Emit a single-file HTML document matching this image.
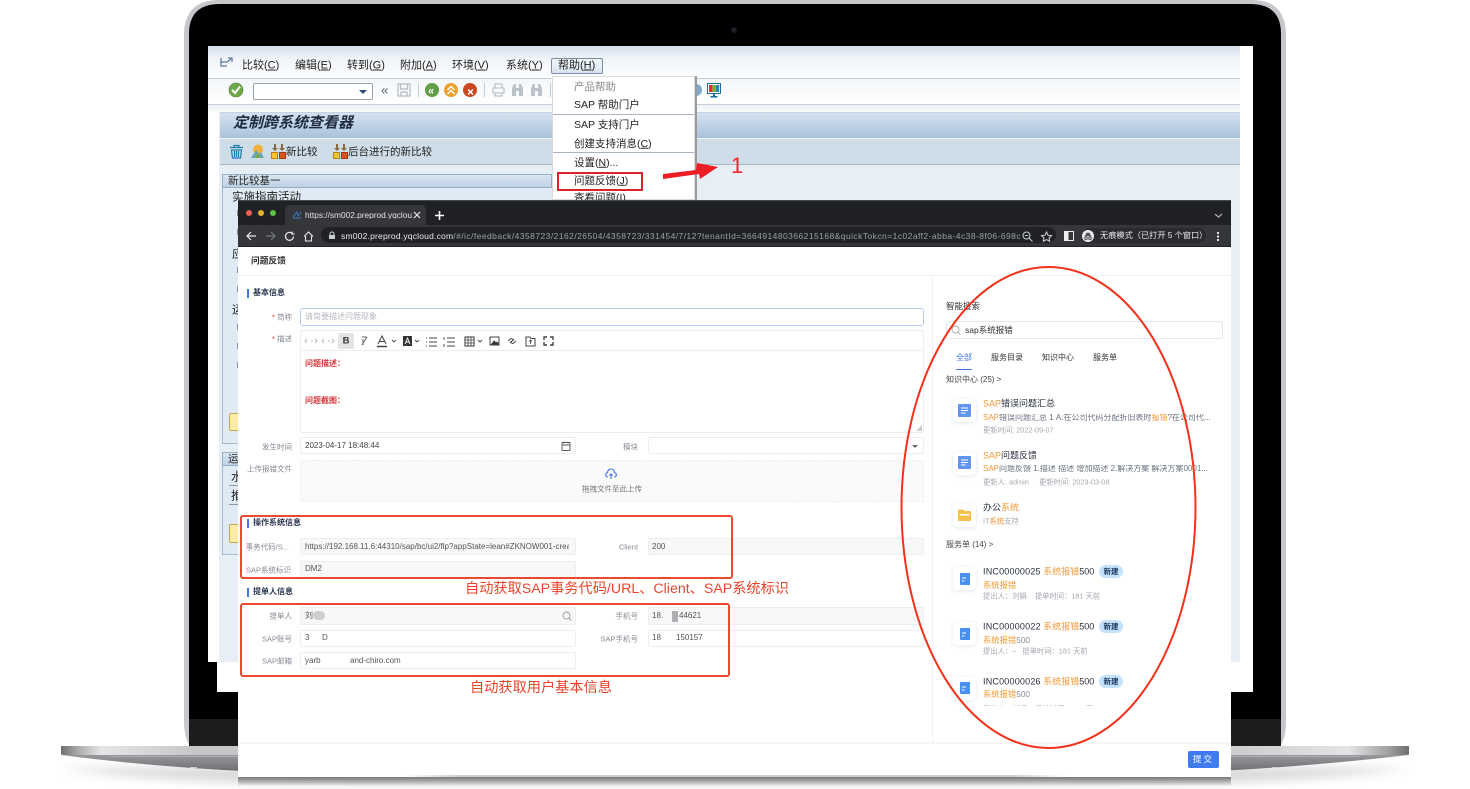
<!DOCTYPE html>
<html lang="zh"><head><meta charset="utf-8"><title>SAP 问题反馈</title>
<style>
*{box-sizing:border-box}
html,body{margin:0;padding:0;width:1470px;height:789px;overflow:hidden;background:#fff}
body{position:relative;font-family:"Liberation Sans","Noto Sans CJK SC",sans-serif;color:#333}
.a{position:absolute}
.t{position:absolute;white-space:nowrap;line-height:1;transform:translateY(-50%);filter:blur(.25px)}
.r{position:absolute;white-space:nowrap;line-height:1;transform:translate(-100%,-50%);color:#858a94;font-size:7.5px;filter:blur(.25px)}
.m{font-size:11px;color:#222}
.d{font-size:10.5px;color:#222;left:574px}
.f{position:absolute;border:1px solid #eceef2;border-radius:2px;background:#fff}
.g{background:#f8f8f9}
.v{font-size:8px;color:#555}
.sec{position:absolute;left:247px;width:2px;height:9px;background:#3f78e8}
.st{font-size:8px;font-weight:bold;color:#2a3550;left:253px}
.tile{position:absolute;width:23px;height:23px;background:#fff;border-radius:4px;box-shadow:0 1px 5px rgba(60,90,150,.14)}
.ttl{font-size:9px;color:#2b3140;left:983px}
.o{color:#f09a36}
.sub{font-size:8px;color:#6b7280;left:983px}
.meta{font-size:7.3px;color:#a4a8b0;left:983px}
.bd{position:absolute;left:1099px;width:24px;height:13px;border-radius:7px;background:#c4e2fb;font-size:7.5px;line-height:13px;text-align:center;color:#17325a;font-weight:bold}
svg{position:absolute;overflow:visible}
</style></head>
<body>

<!-- laptop -->
<svg style="left:0;top:0" width="1470" height="789" viewBox="0 0 1470 789">
<defs>
<linearGradient id="cap" x1="0" x2="1" y1="0" y2="0">
<stop offset="0" stop-color="#6f6f72"/><stop offset=".012" stop-color="#a9a9ab"/><stop offset=".03" stop-color="#e6e6e6"/><stop offset=".1" stop-color="#c6c6c8"/><stop offset=".88" stop-color="#cfcfd1"/><stop offset=".955" stop-color="#e4e4e4"/><stop offset=".985" stop-color="#a0a0a2"/><stop offset="1" stop-color="#6e6e70"/>
</linearGradient>
<linearGradient id="low" x1="0" x2="0" y1="0" y2="1">
<stop offset="0" stop-color="#c4c4c6"/><stop offset=".35" stop-color="#97979b"/><stop offset="1" stop-color="#66666a"/>
</linearGradient>
<filter id="bl" x="-5%" y="-200%" width="110%" height="500%"><feGaussianBlur stdDeviation="5"/></filter>
</defs>
<path d="M60 768 H1410 Q1300 784 1100 784 H370 Q170 784 60 768Z" fill="#999" opacity=".4" filter="url(#bl)"/>
<path d="M219 0 H1252 Q1286 0 1286 36 V720 Q1286 738 1280 746 H190 Q184 738 184 720 V36 Q184 0 219 0Z" fill="#c6c6cb"/>
<path d="M220 4 H1250 Q1281 4 1281 34 V746 H189 V34 Q189 4 220 4Z" fill="#000"/>
<rect x="189" y="719" width="1092" height="27" fill="#1b1c1e"/>
<circle cx="734" cy="30" r="3" fill="#15171c"/><circle cx="734" cy="30" r="1.2" fill="#2a2d36"/>
<path d="M61 746 H1409 V755 Q1250 773 1120 774 H350 Q200 773 61 755Z" fill="url(#low)"/>
<path d="M61 746 H1409 V754 L1405 755 H65 L61 754Z" fill="url(#cap)"/>
<rect x="110" y="756" width="1250" height="1" fill="#d6d6d8" opacity=".35"/>
<rect x="190" y="767" width="7" height="1" fill="#cfcfd1"/><rect x="1272" y="767" width="7" height="1" fill="#cfcfd1"/>
</svg>

<!-- SAP window -->
<div class="a" style="left:217px;top:640px;width:1036px;height:52px;background:#fff"></div>
<div class="a" style="left:1240px;top:46px;width:13px;height:646px;background:#fff"></div>
<div class="a" style="left:208px;top:46px;width:1032px;height:616px;background:#e7eef6"></div>
<div class="a" style="left:208px;top:46px;width:11px;height:616px;background:#fff"></div>
<div class="a" style="left:208px;top:46px;width:1032px;height:32px;background:linear-gradient(#d5deeb,#eef2f7 35%,#fff)"></div>
<div class="a" style="left:208px;top:78px;width:1032px;height:1px;background:#c5cdd8"></div>
<div class="a" style="left:208px;top:79px;width:1032px;height:25px;background:linear-gradient(#f3f6fa,#fff)"></div>
<div class="a" style="left:208px;top:104px;width:1032px;height:1px;background:#c5cdd8"></div>
<div class="a" style="left:208px;top:105px;width:1032px;height:7px;background:linear-gradient(#eef2f7,#f8fafc)"></div>
<div class="a" style="left:220px;top:112px;width:1020px;height:1px;background:#c8d2de"></div>
<div class="a" style="left:220px;top:113px;width:1020px;height:25px;background:linear-gradient(#d4e2ef,#aac2da)"></div>
<div class="a" style="left:220px;top:138px;width:1020px;height:1px;background:#eef3f8"></div>
<div class="a" style="left:220px;top:139px;width:1020px;height:26px;background:#cfdde8;border-bottom:1px solid #a9b7c5"></div>

<svg style="left:219px;top:57px" width="15" height="13" viewBox="0 0 15 13" fill="none" stroke="#3a5a8a" stroke-width="1"><path d="M2 1V9H8M2 5H8L12 2"/><path d="M9 1H13V5"/></svg>
<span class="t m" style="left:242px;top:66px">比较(<u>C</u>)</span>
<span class="t m" style="left:295px;top:66px">编辑(<u>E</u>)</span>
<span class="t m" style="left:347px;top:66px">转到(<u>G</u>)</span>
<span class="t m" style="left:400px;top:66px">附加(<u>A</u>)</span>
<span class="t m" style="left:452px;top:66px">环境(<u>V</u>)</span>
<span class="t m" style="left:506px;top:66px">系统(<u>Y</u>)</span>
<div class="a" style="left:551px;top:58px;width:52px;height:16px;border:1px solid #7c8ea8;border-radius:2px;background:linear-gradient(#f2f6fb,#d9e4f0)"></div>
<span class="t m" style="left:558px;top:66px">帮助(<u>H</u>)</span>

<!-- toolbar -->
<svg style="left:228px;top:82px" width="16" height="16" viewBox="0 0 16 16"><circle cx="8" cy="8" r="7" fill="#6fa84a" stroke="#4a8030" stroke-width=".6"/><path d="M4 8L7 11L12 4.5" fill="none" stroke="#fff" stroke-width="2"/></svg>
<div class="a" style="left:253px;top:83px;width:120px;height:17px;background:#fff;border:1px solid #9aa3ae;border-radius:2px"></div>
<svg style="left:358px;top:89px" width="10" height="6"><path d="M1 1H9L5 5Z" fill="#2d4a73"/></svg>
<span class="t" style="left:381px;top:90px;font-size:13px;color:#55606e">«</span>
<svg style="left:397px;top:83px" width="14" height="14" viewBox="0 0 14 14" fill="none" stroke="#b3bac3" stroke-width="1.2"><path d="M1 1H13V13H1Z"/><path d="M3.5 1V6H10.5V1M4 13V9H10V13"/></svg>
<div class="a" style="left:418px;top:83px;width:1px;height:14px;background:#bcd0e0"></div>
<svg style="left:425px;top:83px" width="14" height="14"><circle cx="7" cy="7" r="7" fill="#5f9e44"/><text x="3" y="11.5" font-size="11" fill="#fff" font-weight="bold" font-family="Liberation Sans">«</text></svg>
<svg style="left:444px;top:83px" width="14" height="14"><circle cx="7" cy="7" r="7" fill="#eda12c"/><path d="M3.5 7L7 3.5L10.5 7M3.5 11L7 7.5L10.5 11" fill="none" stroke="#fff" stroke-width="1.4"/></svg>
<svg style="left:463px;top:83px" width="14" height="14"><circle cx="7" cy="7" r="7" fill="#c9481f"/><path d="M5 6.5L10 11.5M10 6.5L5 11.5" stroke="#fff" stroke-width="1.5"/></svg>
<div class="a" style="left:484px;top:83px;width:1px;height:14px;background:#bcd0e0"></div>
<svg style="left:492px;top:83px" width="14" height="14" fill="none" stroke="#b3bac3" stroke-width="1.1"><path d="M3 5V1H10V5M1 5H12V10H1ZM3 10V13H10V10"/></svg>
<svg style="left:511px;top:83px" width="13" height="14" fill="#bcc2ca"><path d="M1 5L3 1H5V5H8V1H10L12 5V13H8V8H5V13H1Z"/></svg>
<svg style="left:530px;top:83px" width="13" height="14" fill="#bcc2ca"><path d="M1 5L3 1H5V5H8V1H10L12 5V13H8V8H5V13H1Z"/></svg>
<div class="a" style="left:550px;top:83px;width:1px;height:14px;background:#bcd0e0"></div>
<svg style="left:690px;top:83px" width="14" height="14"><circle cx="6" cy="7" r="6" fill="#7fa9c9"/></svg>
<svg style="left:707px;top:83px" width="14" height="15" viewBox="0 0 14 15"><rect x=".5" y=".5" width="13" height="10" fill="#fff" stroke="#1a6f97"/><rect x="2" y="2" width="3.4" height="7" fill="#d33"/><rect x="5.4" y="2" width="3.4" height="7" fill="#7ab32e"/><rect x="8.8" y="2" width="3.4" height="7" fill="#2a7fc0"/><path d="M6 11H8V13H10.5V14.5H3.5V13H6Z" fill="#1a6f97"/></svg>

<!-- title + app toolbar -->
<span class="t" style="left:233px;top:123px;font-size:15px;font-weight:bold;font-style:italic;color:#1d2c3e">定制跨系统查看器</span>
<svg style="left:229px;top:144px" width="15" height="15" viewBox="0 0 15 15" fill="none" stroke="#1a7fa8" stroke-width="1.2"><path d="M1 3.5H14M5 3V1.5H10V3M2.5 6H12.5L11.5 14H3.5Z"/><path d="M5.5 7V13M7.5 7V13M9.5 7V13"/></svg>
<svg style="left:250px;top:144px" width="15" height="15" viewBox="0 0 15 15"><circle cx="8" cy="5.5" r="5" fill="#f1b03c"/><path d="M1 14L6 6L9 10L11 8L14 14Z" fill="#6aa5c0"/><path d="M5 14L8 9L11 14Z" fill="#78a94b"/></svg>
<svg style="left:271px;top:144px" width="15" height="15" viewBox="0 0 15 15"><path d="M3 0H5V4H7L4 7L1 4H3ZM10 0H12V4H14L11 7L8 4H10Z" fill="#8a6a40"/><rect x=".5" y="8.5" width="6" height="6" fill="#f7c236" stroke="#b98314"/><rect x="8.5" y="8.5" width="6" height="6" fill="#d8551f" stroke="#a33a10"/></svg>
<span class="t" style="left:286px;top:152px;font-size:10.5px;color:#222">新比较</span>
<svg style="left:333px;top:144px" width="15" height="15" viewBox="0 0 15 15"><path d="M3 0H5V4H7L4 7L1 4H3ZM10 0H12V4H14L11 7L8 4H10Z" fill="#8a6a40"/><rect x=".5" y="8.5" width="6" height="6" fill="#f7c236" stroke="#b98314"/><rect x="8.5" y="8.5" width="6" height="6" fill="#d8551f" stroke="#a33a10"/></svg>
<span class="t" style="left:348px;top:152px;font-size:10.5px;color:#222">后台进行的新比较</span>

<!-- group boxes -->
<div class="a" style="left:222px;top:174px;width:340px;height:270px;border:1px solid #a7bbcf;background:#dfeaf4"></div>
<div class="a" style="left:222px;top:174px;width:330px;height:14px;background:linear-gradient(#dbe7f2,#bcd1e5);border:1px solid #97aec5"></div>
<span class="t" style="left:228px;top:181px;font-size:10.5px;color:#222">新比较基一</span>
<span class="t" style="left:232px;top:198px;font-size:11.5px;color:#222">实施指南活动</span>
<span class="t" style="left:232px;top:255px;font-size:11.5px;color:#222">应</span>
<span class="t" style="left:232px;top:311px;font-size:11.5px;color:#222">运</span>
<div class="a" style="left:237px;top:210px;width:1px;height:165px;background:repeating-linear-gradient(#8a95a2 0 6px,transparent 6px 19px)"></div>
<div class="a" style="left:229px;top:413px;width:12px;height:18px;background:#fbeaa8;border:1px solid #c4a94d;border-radius:2px"></div>
<div class="a" style="left:222px;top:452px;width:20px;height:103px;border:1px solid #a7bbcf;background:#dfeaf4"></div>
<div class="a" style="left:222px;top:452px;width:20px;height:14px;background:linear-gradient(#dbe7f2,#bcd1e5);border:1px solid #97aec5"></div>
<span class="t" style="left:228px;top:459px;font-size:10.5px;color:#222">运</span>
<span class="t" style="left:231px;top:478px;font-size:11.5px;color:#222">水</span>
<span class="t" style="left:231px;top:497px;font-size:11.5px;color:#222">推</span>
<div class="a" style="left:229px;top:485px;width:10px;height:1px;background:#8899aa"></div>
<div class="a" style="left:229px;top:504px;width:10px;height:1px;background:#8899aa"></div>
<div class="a" style="left:229px;top:524px;width:12px;height:19px;background:#fbeaa8;border:1px solid #c4a94d;border-radius:2px"></div>

<!-- dropdown -->
<div class="a" style="left:552px;top:76px;width:143px;height:124px;background:#fff;border:1px solid #d8dbe0;box-shadow:2px 0 0 #9b9b9b"></div>
<span class="t d" style="top:87px;color:#8a8a8a">产品帮助</span>
<span class="t d" style="top:105px">SAP 帮助门户</span>
<div class="a" style="left:553px;top:114px;width:141px;height:1px;background:#a9b4c2"></div>
<span class="t d" style="top:125px">SAP 支持门户</span>
<span class="t d" style="top:144px">创建支持消息(<u>C</u>)</span>
<div class="a" style="left:553px;top:152px;width:141px;height:1px;background:#a9b4c2"></div>
<span class="t d" style="top:163px">设置(<u>N</u>)...</span>
<span class="t d" style="top:181px">问题反馈(<u>J</u>)</span>
<span class="t d" style="top:198px">查看问题(I)</span>
<div class="a" style="left:557px;top:172px;width:86px;height:19px;border:2px solid #e0202a"></div>

<svg style="left:660px;top:155px" width="90" height="30"><path d="M3 19L36 15L37 8L58 12L40 24L39 19L3 24Z" fill="#ee1c25"/></svg>
<span class="t" style="left:731px;top:166px;font-size:22px;color:#ee2630;font-weight:normal">1</span>

<!-- Chrome window -->
<div class="a" style="left:238px;top:777px;width:993px;height:9px;background:linear-gradient(#7a7a7c,rgba(255,255,255,0))"></div>
<div class="a" style="left:238px;top:200px;width:993px;height:577px;background:#fff"></div>
<div class="a" style="left:238px;top:200px;width:993px;height:25px;background:#202124;border-top:1px solid #45484d"></div>
<div class="a" style="left:238px;top:225px;width:993px;height:22px;background:#35363a;border-bottom:1px solid #222"></div>
<div class="a" style="left:246px;top:210px;width:6px;height:6px;border-radius:50%;background:#ee5f57"></div>
<div class="a" style="left:258px;top:210px;width:6px;height:6px;border-radius:50%;background:#e3b12e"></div>
<div class="a" style="left:270px;top:210px;width:6px;height:6px;border-radius:50%;background:#5cc049"></div>
<div class="a" style="left:285px;top:205px;width:141px;height:20px;background:#35363a;border-radius:5px 5px 0 0"></div>
<svg style="left:292px;top:210px" width="10" height="10" fill="none" stroke="#3f78c9"><path d="M1 7L5 2L6 6L9 2M1 8H9"/></svg>
<span class="t" style="left:305px;top:215px;font-size:8.3px;color:#dfe1e5;width:108px;overflow:hidden">https://sm002.preprod.yqclou...</span>
<svg style="left:413px;top:211px" width="8" height="8" stroke="#e8eaed" stroke-width="1.2"><path d="M1 1L7 7M7 1L1 7"/></svg>
<svg style="left:435px;top:211px" width="9" height="9" stroke="#fff" stroke-width="1.6"><path d="M4.5 0V9M0 4.5H9"/></svg>
<svg style="left:1214px;top:213px" width="9" height="5" fill="none" stroke="#c0c3c8" stroke-width="1.1"><path d="M1 1L4.5 4L8 1"/></svg>
<svg style="left:246px;top:231px" width="11" height="10" fill="none" stroke="#e8eaed" stroke-width="1.2"><path d="M10 5H1M5 1L1 5L5 9"/></svg>
<svg style="left:265px;top:231px" width="11" height="10" fill="none" stroke="#777a80" stroke-width="1.2"><path d="M1 5H10M6 1L10 5L6 9"/></svg>
<svg style="left:284px;top:231px" width="11" height="11" fill="none" stroke="#e8eaed" stroke-width="1.2"><path d="M9.5 5.5A4 4 0 1 1 8 2.2M8 0.5V3H10.5"/></svg>
<svg style="left:303px;top:231px" width="11" height="11" fill="none" stroke="#e8eaed" stroke-width="1.1"><path d="M1 5.5L5.5 1L10 5.5M2.5 5V10H8.5V5"/></svg>
<div class="a" style="left:321px;top:227px;width:735px;height:16px;border-radius:8px;background:#202124"></div>
<svg style="left:329px;top:232px" width="6" height="7" fill="#c9ccd1"><rect y="3" width="6" height="4"/><path d="M1 3V2A2 2 0 0 1 5 2V3" fill="none" stroke="#c9ccd1"/></svg>
<span class="t" style="left:341px;top:236px;width:680px;overflow:hidden;font-size:8.5px;color:#9aa0a6;letter-spacing:.44px;padding:1px 0"><span style="color:#e8eaed;letter-spacing:.2px">sm002.preprod.yqcloud.com</span>/#/ic/feedback/4358723/2162/26504/4358723/331454/7/12?tenantId=366491480366215168&amp;quickTokcn=1c02aff2-abba-4c38-8f06-698c...</span>
<svg style="left:1022px;top:231px" width="11" height="11" fill="none" stroke="#c6c9ce" stroke-width="1.1"><circle cx="4.5" cy="4.5" r="3.5"/><path d="M7 7L10.5 10.5M3 4.5H6"/></svg>
<svg style="left:1041px;top:231px" width="11" height="11" fill="none" stroke="#d5d7db"><path d="M5.5 1L7 4.2L10.5 4.6L8 7L8.7 10.3L5.5 8.6L2.3 10.3L3 7L.5 4.6L4 4.2Z"/></svg>
<svg style="left:1064px;top:231px" width="10" height="10"><rect x=".5" y=".5" width="9" height="9" fill="#35363a" stroke="#eee"/><rect x="1" y="1" width="3.5" height="8" fill="#eee"/></svg>
<div class="a" style="left:1082px;top:228px;width:124px;height:15px;border-radius:8px;background:#2a2b2e"></div>
<svg style="left:1082px;top:230px" width="12" height="12"><circle cx="6" cy="6" r="6" fill="#e8eaed"/><path d="M2 6H10M3.5 6L4.5 3H7.5L8.500 6" fill="#555" stroke="#555" stroke-width=".6"/><circle cx="4" cy="8.200" r="1.300" fill="none" stroke="#555"/><circle cx="8" cy="8.200" r="1.300" fill="none" stroke="#555"/></svg>
<span class="t" style="left:1100px;top:236px;font-size:8.2px;color:#e8eaed">无痕模式（已打开 5 个窗口）</span>
<div class="a" style="left:1217px;top:232px;width:2px;height:2px;background:#e8eaed;box-shadow:0 3.500px #e8eaed,0 7px #e8eaed"></div>

<!-- page -->
<span class="t" style="left:251px;top:261px;font-size:8.7px;color:#2c2c2c;font-weight:bold">问题反馈</span>
<div class="a" style="left:238px;top:275px;width:993px;height:1px;background:#f0f1f3"></div>
<div class="a" style="left:932px;top:275px;width:1px;height:467px;background:#eff0f3"></div>
<div class="a" style="left:238px;top:742px;width:993px;height:2px;background:#f5f6f7"></div>

<div class="sec" style="top:289px"></div><span class="t st" style="top:293px">基本信息</span>
<span class="r" style="left:292px;top:317px"><span style="color:#e5352b">*</span> 简称</span>
<div class="f" style="left:300px;top:308px;width:624px;height:18px;border-color:#b6caf3;border-radius:3px"></div>
<span class="t" style="left:305px;top:317px;font-size:8px;color:#b5b8be">请简要描述问题现象</span>
<span class="r" style="left:292px;top:339px"><span style="color:#e5352b">*</span> 描述</span>
<div class="f" style="left:300px;top:330px;width:624px;height:103px"></div>
<div class="a" style="left:301px;top:350px;width:622px;height:1px;background:#eceef2"></div>
<div class="a" style="left:338px;top:333px;width:16px;height:16px;background:#e4e4e4;border-radius:2px"></div>
<svg style="left:300px;top:332px" width="260" height="18" fill="none" stroke="#444" stroke-width="1">
<path d="M7 7L5 9L7 11M11 9H13M15 7L17 9L15 11" stroke="#bbb"/><path d="M24 7L22 9L24 11M28 9H30M32 7L34 9L32 11" stroke="#bbb"/>
<path d="M63 7V13M67 5L62 13M62 5H67" stroke="#666"/>
<path d="M78 12L82 4L86 12M79.500 9.500H84.500" /><path d="M77 14.500H87" stroke-width="1.500"/>
<path d="M92 8L94 10L96 8" stroke-width=".9"/>
<rect x="103" y="4" width="9" height="10" fill="#333" stroke="none"/><path d="M105 12L107.500 6L110 12M106 10H109" stroke="#fff" stroke-width=".9"/>
<path d="M115 8L117 10L119 8" stroke-width=".9"/>
<path d="M129 6H137M129 10H137M129 14H137M126 6H127M126 10H127M126 14H127" stroke-width=".9"/>
<path d="M147 6H155M147 10H155M147 14H155M144 5V8M144 12V15" stroke-width=".9"/>
<rect x="165" y="5" width="9" height="9" stroke="#333"/><path d="M165 8H174M165 11H174M168 5V14M171 5V14" stroke-width=".8"/>
<path d="M178 8L180 10L182 8" stroke-width=".9"/>
<rect x="190" y="5" width="9" height="8" /><path d="M191 13L194 9L196 11L197 10L199 13Z" fill="#333"/>
<path d="M210 11L214 7M208 9L211 6.500A2 2 0 0 1 213 9M216 9L213 11.500A2 2 0 0 1 211 9" stroke-width=".9"/>
<path d="M226 5H230L231 6.500H235V14H226Z"/><path d="M230.500 12V8M229 9.500L230.500 8L232 9.500" stroke-width=".8"/>
<path d="M244 8V5H247M250 5H253V8M244 10V13H247M253 10V13H250" stroke-width="1.400"/>
</svg>
<span class="t" style="left:346px;top:341px;font-size:9.500px;font-weight:bold;color:#333;transform:translate(-50%,-50%)">B</span>
<span class="t" style="left:305px;top:364px;font-size:8px;color:#d8353a;font-weight:bold">问题描述：</span>
<span class="t" style="left:305px;top:401px;font-size:8px;color:#d8353a;font-weight:bold">问题截图：</span>
<svg style="left:916px;top:425px" width="6" height="6"><path d="M6 0V6H0Z" fill="#ccc"/></svg>

<span class="r" style="left:292px;top:447px">发生时间</span>
<div class="f" style="left:300px;top:437px;width:276px;height:17px"></div>
<span class="t v" style="left:305px;top:446px;color:#444">2023-04-17 18:48:44</span>
<svg style="left:561px;top:441px" width="10" height="10" fill="none" stroke="#555" stroke-width=".9"><rect x="1" y="1.500" width="8" height="8"/><path d="M1 4H9M3 .5V2.500M7 .5V2.500"/></svg>
<span class="r" style="left:638px;top:447px">模块</span>
<div class="f" style="left:648px;top:437px;width:276px;height:17px"></div>
<svg style="left:912px;top:445px" width="6" height="3"><path d="M0 0H6L3 3Z" fill="#666"/></svg>
<span class="r" style="left:292px;top:469px">上传报错文件</span>
<div class="a" style="left:300px;top:460px;width:624px;height:42px;background:#fafafa;border:1px dashed #eee;border-radius:2px"></div>
<svg style="left:605px;top:469px" width="12" height="11" fill="none" stroke="#3f78e8" stroke-width="1.100"><path d="M3 8H2.500A2.300 2.300 0 0 1 2.500 3.500A3.500 3.500 0 0 1 9.500 3.500A2.300 2.300 0 0 1 9.500 8H9M6 10V5M4.300 6.500L6 5L7.700 6.500"/></svg>
<span class="t" style="left:582px;top:489px;font-size:7.500px;color:#777">拖拽文件至此上传</span>

<div class="sec" style="top:519px"></div><span class="t st" style="top:523px">操作系统信息</span>
<span class="r" style="left:289px;top:547px">事务代码/S...</span>
<div class="f g" style="left:300px;top:538px;width:276px;height:17px"></div>
<span class="t v" style="left:305px;top:547px;width:264px;overflow:hidden;padding:1px 0">https://192.168.11.6:44310/sap/bc/ui2/flp?appState=lean#ZKNOW001-create</span>
<span class="r" style="left:638px;top:547px">Client</span>
<div class="f g" style="left:648px;top:538px;width:276px;height:17px"></div>
<span class="t v" style="left:652px;top:547px">200</span>
<span class="r" style="left:291px;top:570px">SAP系统标识</span>
<div class="f g" style="left:300px;top:561px;width:276px;height:17px"></div>
<span class="t v" style="left:305px;top:569px">DM2</span>

<span class="t" style="left:465px;top:589px;font-size:14.200px;color:#e8452c">自动获取SAP事务代码/URL、Client、SAP系统标识</span>

<div class="sec" style="top:588px"></div><span class="t st" style="top:592px">提单人信息</span>
<span class="r" style="left:292px;top:616px">提单人</span>
<div class="f g" style="left:300px;top:607px;width:276px;height:18px"></div>
<span class="t v" style="left:305px;top:616px">刘</span>
<div class="a" style="left:313px;top:611px;width:12px;height:9px;border-radius:5px;background:#cfcfd2"></div>
<svg style="left:562px;top:611px" width="10" height="10" fill="none" stroke="#999" stroke-width=".9"><circle cx="4.500" cy="4.500" r="3.500"/><path d="M7 7L9.500 9.500"/></svg>
<span class="r" style="left:638px;top:616px">手机号</span>
<div class="f g" style="left:648px;top:607px;width:276px;height:18px"></div>
<span class="t v" style="left:652px;top:616px">18.</span>
<div class="a" style="left:672px;top:611px;width:6px;height:11px;background:#b0b0b4"></div>
<span class="t v" style="left:679px;top:616px">44621</span>
<span class="r" style="left:292px;top:639px">SAP账号</span>
<div class="f" style="left:300px;top:630px;width:276px;height:17px"></div>
<span class="t v" style="left:305px;top:638px">3</span><span class="t v" style="left:322px;top:638px">D</span>
<span class="r" style="left:638px;top:639px">SAP手机号</span>
<div class="f" style="left:648px;top:630px;width:276px;height:17px"></div>
<span class="t v" style="left:652px;top:638px">18</span><span class="t v" style="left:676px;top:638px">150157</span>
<span class="r" style="left:292px;top:661px">SAP邮箱</span>
<div class="f" style="left:300px;top:652px;width:276px;height:17px"></div>
<span class="t v" style="left:305px;top:661px">yarb</span><span class="t v" style="left:350px;top:661px">and-chiro.com</span>

<div class="a" style="left:240px;top:515px;width:493px;height:64px;border:2px solid #ea4a32;border-radius:3px"></div>
<div class="a" style="left:240px;top:603px;width:490px;height:74px;border:2px solid #ea4a32;border-radius:3px"></div>
<span class="t" style="left:470px;top:688px;font-size:14.200px;color:#e8452c">自动获取用户基本信息</span>

<!-- right pane -->
<span class="t" style="left:946px;top:306px;font-size:8.500px;color:#333">智能搜索</span>
<div class="f" style="left:946px;top:321px;width:277px;height:18px;border-color:#e3e6ec;border-radius:3px"></div>
<svg style="left:951px;top:325px" width="10" height="10" fill="none" stroke="#aaa" stroke-width=".9"><circle cx="4.500" cy="4.500" r="3.500"/><path d="M7 7L9.500 9.500"/></svg>
<span class="t" style="left:965px;top:330px;font-size:8.500px;color:#333">sap系统报错</span>
<span class="t" style="left:956px;top:358px;font-size:8px;color:#3f78e8">全部</span>
<span class="t" style="left:991px;top:358px;font-size:8px;color:#333">服务目录</span>
<span class="t" style="left:1042px;top:358px;font-size:8px;color:#333">知识中心</span>
<span class="t" style="left:1093px;top:358px;font-size:8px;color:#333">服务单</span>
<div class="a" style="left:956px;top:369px;width:16px;height:1px;background:#3f78e8"></div>
<span class="t" style="left:946px;top:380px;font-size:8px;color:#444">知识中心 (25) &gt;</span>

<div class="tile" style="left:953px;top:399px"></div>
<svg style="left:958px;top:404px" width="13" height="13"><rect width="13" height="13" rx="1" fill="#6394f0"/><path d="M3 4H10M3 6.500H10M3 9H7.500" stroke="#fff"/></svg>
<span class="t ttl" style="top:404px"><span class="o">SAP</span>错误问题汇总</span>
<span class="t sub" style="top:418px;width:228px;overflow:hidden"><span class="o">SAP</span>错误问题汇总 1 A:在公司代码分配折旧表时<span class="o">报错</span>?在公司代...</span>
<span class="t meta" style="top:430px">更新时间: 2022-09-07</span>

<div class="tile" style="left:953px;top:452px"></div>
<svg style="left:958px;top:456px" width="13" height="13"><rect width="13" height="13" rx="1" fill="#6394f0"/><path d="M3 4H10M3 6.500H10M3 9H7.500" stroke="#fff"/></svg>
<span class="t ttl" style="top:456px"><span class="o">SAP</span>问题反馈</span>
<span class="t sub" style="top:469px;width:228px;overflow:hidden"><span class="o">SAP</span>问题反馈 1.描述 描述 增加描述 2.解决方案 解决方案0001...</span>
<span class="t meta" style="top:482px">更新人: admin &nbsp;&nbsp;&nbsp; 更新时间: 2023-03-08</span>

<div class="tile" style="left:953px;top:504px"></div>
<svg style="left:958px;top:509px" width="13" height="12"><path d="M0 1.500Q0 .5 1 .5H5L6.500 2H12Q13 2 13 3V11Q13 12 12 12H1Q0 12 0 11Z" fill="#f6c04d"/><rect x="1.500" y="5" width="10" height="1.500" fill="#fff"/></svg>
<span class="t ttl" style="top:508px">办公<span class="o">系统</span></span>
<span class="t meta" style="top:521px">IT<span class="o">系统</span>支持</span>

<span class="t" style="left:946px;top:545px;font-size:8px;color:#444">服务单 (14) &gt;</span>

<div class="tile" style="left:953px;top:567px"></div>
<svg style="left:959px;top:573px" width="11" height="12"><path d="M1 1Q1 0 2 0H11V12H2Q1 12 1 11Z" fill="#4a90ef"/><path d="M3 5H7M3 8H5.500" stroke="#fff"/></svg>
<span class="t ttl" style="top:572px"><span style="letter-spacing:.2px">INC00000025</span> <span class="o">系统报错</span>500</span>
<div class="bd" style="top:565px">新建</div>
<span class="t" style="left:983px;top:585px;font-size:8.300px;color:#f09a36">系统报错</span>
<span class="t meta" style="top:596px">提出人：刘娟 &nbsp;&nbsp; 提单时间：181 天前</span>

<div class="tile" style="left:953px;top:622px"></div>
<svg style="left:959px;top:628px" width="11" height="12"><path d="M1 1Q1 0 2 0H11V12H2Q1 12 1 11Z" fill="#4a90ef"/><path d="M3 5H7M3 8H5.500" stroke="#fff"/></svg>
<span class="t ttl" style="top:627px"><span style="letter-spacing:.2px">INC00000022</span> <span class="o">系统报错</span>500</span>
<div class="bd" style="top:620px">新建</div>
<span class="t" style="left:983px;top:640px;font-size:8.300px;color:#f09a36">系统报错<span style="color:#8a8f99">500</span></span>
<span class="t meta" style="top:651px">提出人：– &nbsp; 提单时间：181 天前</span>

<div class="tile" style="left:953px;top:677px"></div>
<svg style="left:959px;top:682px" width="11" height="12"><path d="M1 1Q1 0 2 0H11V12H2Q1 12 1 11Z" fill="#4a90ef"/><path d="M3 5H7M3 8H5.500" stroke="#fff"/></svg>
<span class="t ttl" style="top:682px"><span style="letter-spacing:.2px">INC00000026</span> <span class="o">系统报错</span>500</span>
<div class="bd" style="top:675px">新建</div>
<span class="t" style="left:983px;top:694px;font-size:8.300px;color:#f09a36">系统报错<span style="color:#8a8f99">500</span></span>
<div class="a" style="left:983px;top:703px;width:112px;height:3px;overflow:hidden"><span class="t meta" style="left:0;top:2px;transform:none">提出人：刘娟 &nbsp;&nbsp; 提单时间：181 天前</span></div>

<div class="a" style="left:1188px;top:751px;width:31px;height:17px;background:#3f7bf0;border-radius:2px;color:#fff;font-size:8.500px;line-height:17px;text-align:center;letter-spacing:2px">提交</div>
<div class="a" style="left:405px;top:775px;width:660px;height:2px;background:linear-gradient(90deg,#fff,#bbb 8%,#bbb 92%,#fff);opacity:.7"></div>

<!-- red ellipse -->
<svg style="left:0;top:0" width="1470" height="789"><ellipse cx="1048.500" cy="507.500" rx="147" ry="240.500" fill="none" stroke="#f2321a" stroke-width="2"/></svg>
</body></html>
